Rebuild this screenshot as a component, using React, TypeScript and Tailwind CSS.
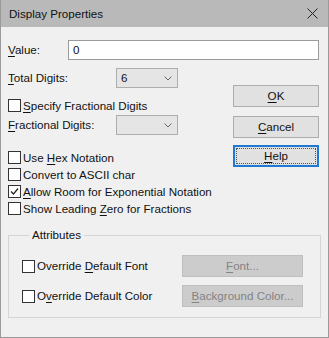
import React from 'react';

const font = "font-['Liberation_Sans','Arial',sans-serif]";

function U({ children }: { children: React.ReactNode }) {
  return <span className="underline underline-offset-[2px] decoration-[1px]">{children}</span>;
}

function Check({ checked = false }: { checked?: boolean }) {
  return (
    <span className="w-[13px] h-[13px] border border-[#333] bg-white flex items-center justify-center shrink-0">
      {checked && (
        <svg width="9" height="9" viewBox="0 0 9 9">
          <path d="M1 4.5 L3.5 7 L8 1.5" stroke="#222" strokeWidth="1.2" fill="none" />
        </svg>
      )}
    </span>
  );
}

function CheckRow({ checked, children, className = '' }: { checked?: boolean; children: React.ReactNode; className?: string }) {
  return (
    <div className={`flex items-center gap-[2px] h-[17px] ${className}`}>
      <Check checked={checked} />
      <span className="leading-none">{children}</span>
    </div>
  );
}

function Combo({ value }: { value?: string }) {
  return (
    <div className="w-[62px] h-[20px] bg-[#e5e5e5] border border-[#adadad] flex items-center justify-between pl-[4px] pr-[5px]">
      <span>{value}</span>
      <svg width="8" height="5" viewBox="0 0 8 5">
        <path d="M0.5 0.5 L4 4 L7.5 0.5" stroke="#666" strokeWidth="1" fill="none" />
      </svg>
    </div>
  );
}

function Btn({ children, className = '' }: { children: React.ReactNode; className?: string }) {
  return (
    <div className={`w-[86px] h-[22px] bg-[#e1e1e1] border border-[#adadad] flex items-center justify-center ${className}`}>
      {children}
    </div>
  );
}

export default function App() {
  return (
    <div className={`w-[329px] h-[338px] bg-[#f0f0f0] border border-[#9a9a9a] border-t-0 flex flex-col text-[11.6px] text-[#111] ${font}`}>
      <div className="h-[27px] bg-[#b9b9b9] flex items-center justify-between pl-[8px] pr-[10px] shrink-0">
        <span>Display Properties</span>
        <svg width="11" height="11" viewBox="0 0 11 11">
          <path d="M0.5 0.5 L10.5 10.5 M10.5 0.5 L0.5 10.5" stroke="#222" strokeWidth="1" />
        </svg>
      </div>

      <div className="flex flex-col pl-[7px] pr-[9px]">
        <div className="flex items-center mt-[13px] h-[20px]">
          <span className="w-[60px]"><U>V</U>alue:</span>
          <div className="flex-1 h-[20px] bg-white border border-[#9b9b9b] flex items-center pl-[4px]">0</div>
        </div>

        <div className="flex mt-[8px]">
          <div className="flex flex-col w-[224px]">
            <div className="flex items-center h-[20px]">
              <span className="w-[108px]"><U>T</U>otal Digits:</span>
              <Combo value="6" />
            </div>
            <CheckRow className="mt-[9px] h-[16px]"><U>S</U>pecify Fractional Digits</CheckRow>
            <div className="flex items-center h-[20px] mt-[1px]">
              <span className="w-[108px]"><U>F</U>ractional Digits:</span>
              <Combo />
            </div>
            <div className="flex flex-col mt-[14px]">
              <CheckRow>Use <U>H</U>ex Notation</CheckRow>
              <CheckRow>Convert to ASCII char</CheckRow>
              <CheckRow checked><U>A</U>llow Room for Exponential Notation</CheckRow>
              <CheckRow>Show Leading <U>Z</U>ero for Fractions</CheckRow>
            </div>
          </div>
          <div className="flex flex-col mt-[17px] ml-[1px]">
            <Btn><U>O</U>K</Btn>
            <Btn className="mt-[9px]"><U>C</U>ancel</Btn>
            <div className="mt-[7px] w-[86px] h-[22px] bg-[#e1e1e1] border-2 border-[#1f7ad6] p-[1px]">
              <div className="w-full h-full border border-dotted border-[#555] flex items-center justify-center">
                <U>H</U>elp
              </div>
            </div>
          </div>
        </div>

        <fieldset className="mt-[11px] border border-[#d5d5d5] w-[313px] h-[90px] pl-[13px] pr-[17px] flex flex-col">
          <legend className="ml-[7px] px-[3px] leading-[14px]">Attributes</legend>
          <div className="flex items-center justify-between mt-[13px] h-[22px]">
            <CheckRow>Override <U>D</U>efault Font</CheckRow>
            <div className="w-[121px] h-[22px] bg-[#cccccc] border border-[#bfbfbf] flex items-center justify-center text-[#838383]">
              <span><U>F</U>ont...</span>
            </div>
          </div>
          <div className="flex items-center justify-between mt-[8px] h-[22px]">
            <CheckRow>O<U>v</U>erride Default Color</CheckRow>
            <div className="w-[121px] h-[22px] bg-[#cccccc] border border-[#bfbfbf] flex items-center justify-center text-[#838383]">
              <span><U>B</U>ackground Color...</span>
            </div>
          </div>
        </fieldset>
      </div>
    </div>
  );
}
